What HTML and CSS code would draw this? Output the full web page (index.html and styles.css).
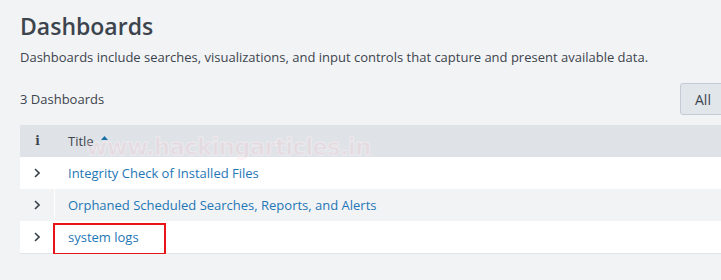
FILE: index.html
```html
<!DOCTYPE html>
<html>
<head>
<meta charset="utf-8">
<link rel="stylesheet" href="styles.css">
</head>
<body>
<div class="page">
  <h1 class="title">Dashboards</h1>
  <p class="desc">Dashboards include searches, visualizations, and input controls that capture and present available data.</p>
  <div class="toolbar">
    <span class="count">3 Dashboards</span>
    <button class="btn">All</button>
  </div>
  <div class="table">
    <div class="row head">
      <div class="cell exp"><span class="info">i</span></div>
      <div class="cell main">Title <svg class="caret" width="7" height="4" viewBox="0 0 7 4"><path d="M0 4 L3.5 0 L7 4 Z" fill="#1a6fa8"/></svg></div>
    </div>
    <div class="row">
      <div class="cell exp"><svg class="chev" width="6" height="10" viewBox="0 0 6 10"><path d="M1 1 L5 5 L1 9" fill="none" stroke="#3c444d" stroke-width="1.6"/></svg></div>
      <div class="cell main"><a class="link">Integrity Check of Installed Files</a></div>
    </div>
    <div class="row alt">
      <div class="cell exp"><svg class="chev" width="6" height="10" viewBox="0 0 6 10"><path d="M1 1 L5 5 L1 9" fill="none" stroke="#3c444d" stroke-width="1.6"/></svg></div>
      <div class="cell main"><a class="link">Orphaned Scheduled Searches, Reports, and Alerts</a></div>
    </div>
    <div class="row last">
      <div class="cell exp"><svg class="chev" width="6" height="10" viewBox="0 0 6 10"><path d="M1 1 L5 5 L1 9" fill="none" stroke="#3c444d" stroke-width="1.6"/></svg></div>
      <div class="cell main"><a class="link">system logs</a><span class="highlight"></span></div>
    </div>
  </div>
  <div class="watermark">www.hackingarticles.in</div>
</div>
</body>
</html>
```
FILE: styles.css
```css
html, body {
  margin: 0;
  padding: 0;
  overflow: hidden;
}
body {
  background: #f2f3f5;
  font-family: "Open Sans", "Noto Sans", sans-serif;
  color: #3c444d;
}
.page {
  position: relative;
  width: 740px;
  padding: 11px 0 0 20px;
  box-sizing: border-box;
}
.title {
  margin: 0;
  font-size: 23px;
  font-weight: 600;
  line-height: 30px;
  color: #3c444d;
}
.desc {
  margin: 7px 0 0;
  font-size: 13px;
  line-height: 18px;
}
.toolbar {
  display: flex;
  align-items: center;
  justify-content: space-between;
  margin-top: 17px;
  height: 32px;
}
.count {
  font-size: 13px;
}
.btn {
  width: 60px;
  height: 32px;
  background: #e1e6eb;
  border: 1px solid #c3cbd4;
  border-radius: 3px;
  font-family: inherit;
  font-size: 14px;
  color: #3c444d;
  text-align: left;
  padding: 0 0 0 14px;
}
.table {
  margin-top: 10px;
  border-bottom: 1px solid #e1e4e8;
}
.row {
  display: flex;
  height: 32px;
  background: #ffffff;
}
.row.head {
  background: #dfe3e8;
}
.row.alt {
  background: #f2f3f5;
}
.cell {
  display: flex;
  align-items: center;
  font-size: 13px;
}
.exp {
  width: 35px;
  justify-content: center;
  border-right: 1px solid transparent;
  box-sizing: border-box;
}
.alt .exp {
  border-right-color: #ffffff;
}
.main {
  position: relative;
  padding-left: 13px;
  flex: 1;
}
.info {
  font-family: "DejaVu Serif", serif;
  font-weight: bold;
  font-size: 12px;
  margin-left: 1px;
}
.caret {
  margin-left: 7px;
  margin-top: -6px;
}
.link {
  color: #1e77b6;
  text-decoration: none;
}
.highlight {
  position: absolute;
  left: -2px;
  top: 2px;
  width: 109px;
  height: 28px;
  border: 2px solid #e8141a;
}
.watermark {
  position: absolute;
  left: 86px;
  top: 134px;
  font-family: "DejaVu Sans", sans-serif;
  font-weight: bold;
  font-size: 23px;
  letter-spacing: -0.8px;
  color: rgba(255, 180, 190, 0.18);
  -webkit-text-stroke: 1px rgba(255, 255, 255, 0.35);
  pointer-events: none;
}
```
